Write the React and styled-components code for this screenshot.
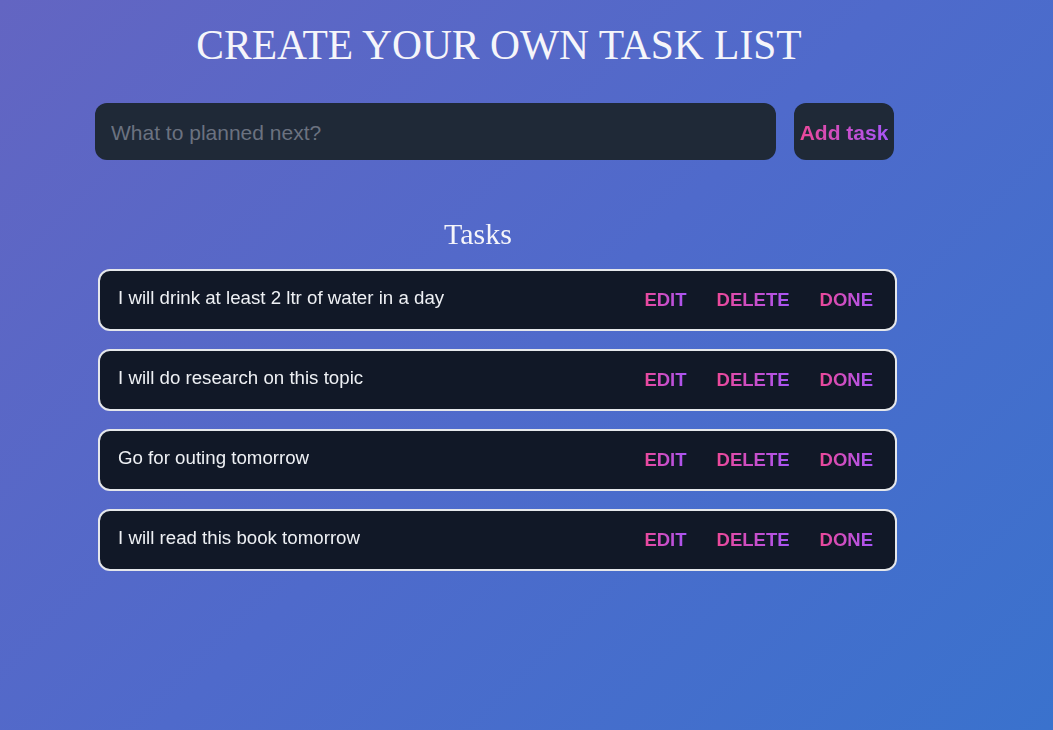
import React, { useState } from 'react'
import styled, { createGlobalStyle } from 'styled-components'

const GlobalStyle = createGlobalStyle`
  html, body {
    margin: 0;
    padding: 0;
  }
  body {
    min-height: 100vh;
    background: linear-gradient(135deg, #6365c2 0%, #4f6acb 50%, #3a72cd 100%);
    background-attachment: fixed;
    font-family: "Liberation Sans", Arial, sans-serif;
  }
`

const Page = styled.div`
  min-height: 730px;
  padding: 0 0 0 95px;
  box-sizing: border-box;
`

const Container = styled.div`
  width: 808px;
  display: flex;
  flex-direction: column;
`

const Title = styled.h1`
  margin: 20px 0 0;
  font-family: "Liberation Serif", "Times New Roman", serif;
  font-weight: normal;
  font-size: 41.5px;
  line-height: 50px;
  color: #f5f5fa;
  text-align: center;
`

const Form = styled.form`
  display: flex;
  gap: 18px;
  width: 799px;
  margin-top: 33px;
`

const Input = styled.input`
  flex: 1;
  height: 57px;
  box-sizing: border-box;
  border: none;
  outline: none;
  border-radius: 12px;
  background: #1f2937;
  color: #e5e7eb;
  padding: 2px 16px 0;
  font-family: "Liberation Sans", Arial, sans-serif;
  font-size: 21px;
  caret-color: #e5e7eb;

  &::placeholder {
    color: #6b7280;
  }
`

const GradientText = styled.span`
  background: linear-gradient(90deg, #ec4899, #a855f7);
  -webkit-background-clip: text;
  background-clip: text;
  color: transparent;
`

const AddButton = styled.button`
  width: 100px;
  height: 57px;
  border: none;
  border-radius: 12px;
  background: #1f2937;
  font-family: "Liberation Sans", Arial, sans-serif;
  font-size: 21px;
  font-weight: bold;
  cursor: pointer;
  padding: 2px 0 0;
`

const Heading = styled.h2`
  width: 760px;
  margin: 57px 0 0 3px;
  font-family: "Liberation Serif", "Times New Roman", serif;
  font-weight: normal;
  font-size: 30px;
  line-height: 34px;
  color: #f5f5fa;
  text-align: center;
`

const List = styled.ul`
  list-style: none;
  margin: 18px 0 0 3px;
  padding: 0;
  display: flex;
  flex-direction: column;
  gap: 18px;
  width: 799px;
`

const Row = styled.li`
  height: 62px;
  box-sizing: border-box;
  display: flex;
  align-items: center;
  justify-content: space-between;
  padding: 0 22px 0 18px;
  background: #111827;
  border: 2px solid #e5e7eb;
  border-radius: 12px;
`

const TaskText = styled.span`
  font-size: 18.7px;
  color: #eef0f4;
  margin-top: -4px;
  text-decoration: ${props => (props.done ? 'line-through' : 'none')};
`

const Actions = styled.div`
  display: flex;
  gap: 30px;
`

const ActionButton = styled.button`
  border: none;
  background: none;
  padding: 0;
  font-family: "Liberation Sans", Arial, sans-serif;
  font-size: 18.5px;
  font-weight: bold;
  cursor: pointer;
`

const initialTasks = [
  'I will drink at least 2 ltr of water in a day',
  'I will do research on this topic',
  'Go for outing tomorrow',
  'I will read this book tomorrow',
]

export default function App() {
  const [tasks, setTasks] = useState(
    initialTasks.map((text, i) => ({ id: i, text, done: false }))
  )
  const [value, setValue] = useState('')

  const addTask = e => {
    e.preventDefault()
    if (!value.trim()) return
    setTasks([...tasks, { id: Date.now(), text: value, done: false }])
    setValue('')
  }

  const remove = id => setTasks(tasks.filter(t => t.id !== id))
  const toggle = id =>
    setTasks(tasks.map(t => (t.id === id ? { ...t, done: !t.done } : t)))

  return (
    <Page>
      <GlobalStyle />
      <Container>
        <Title>CREATE YOUR OWN TASK LIST</Title>
        <Form onSubmit={addTask}>
          <Input
            autoFocus
            placeholder="What to planned next?"
            value={value}
            onChange={e => setValue(e.target.value)}
          />
          <AddButton type="submit">
            <GradientText>Add task</GradientText>
          </AddButton>
        </Form>
        <Heading>Tasks</Heading>
        <List>
          {tasks.map(task => (
            <Row key={task.id}>
              <TaskText done={task.done}>{task.text}</TaskText>
              <Actions>
                <ActionButton>
                  <GradientText>EDIT</GradientText>
                </ActionButton>
                <ActionButton onClick={() => remove(task.id)}>
                  <GradientText>DELETE</GradientText>
                </ActionButton>
                <ActionButton onClick={() => toggle(task.id)}>
                  <GradientText>DONE</GradientText>
                </ActionButton>
              </Actions>
            </Row>
          ))}
        </List>
      </Container>
    </Page>
  )
}
